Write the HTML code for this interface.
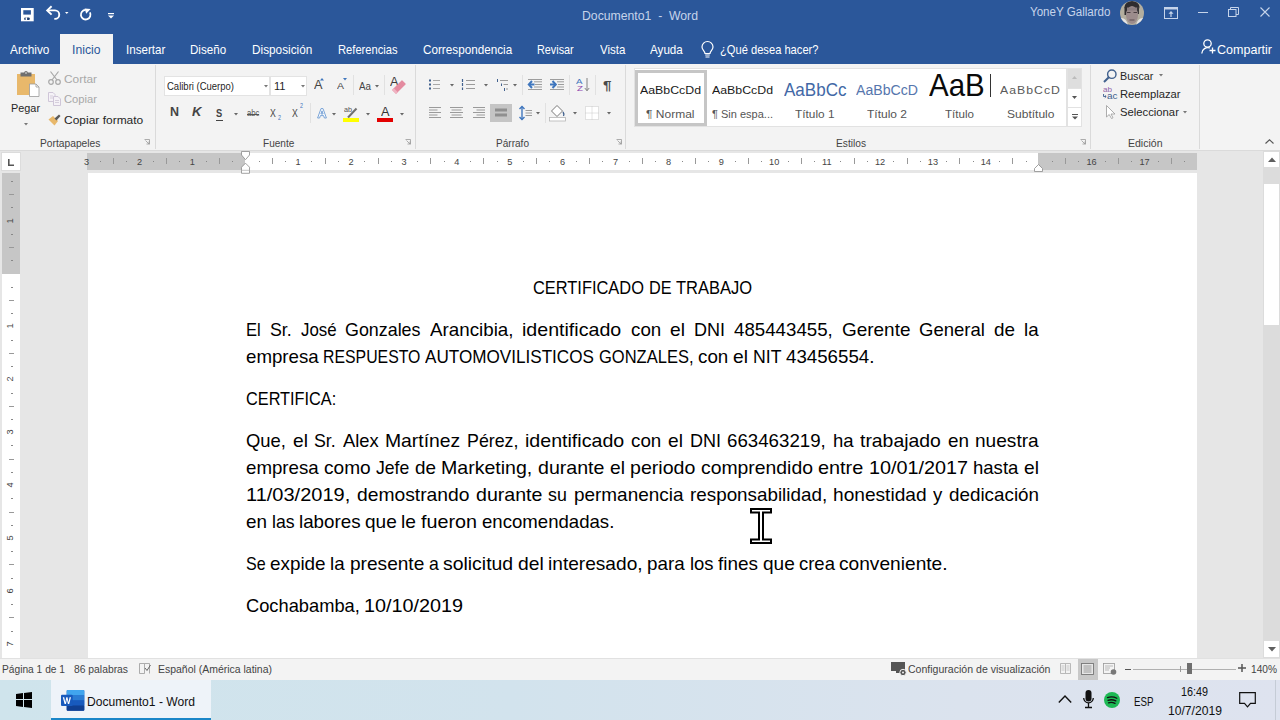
<!DOCTYPE html><html><head><meta charset="utf-8"><style>
html,body{margin:0;padding:0;width:1280px;height:720px;overflow:hidden;position:relative;font-family:"Liberation Sans", sans-serif;}
.tx{position:absolute;white-space:pre;line-height:1.117;transform-origin:0 0;}

.a{position:absolute;}
svg.a{overflow:visible;}
#title{left:0;top:0;width:1280px;height:64px;background:#2b579a;}
#ribbon{left:0;top:64px;width:1280px;height:87px;background:#f3f3f3;border-bottom:1px solid #dadada;box-sizing:border-box;}
#docbg{left:0;top:151px;width:1280px;height:507px;background:#e6e6e6;}
#page{left:88px;top:173px;width:1109px;height:485px;background:#fff;}
#status{left:0;top:658px;width:1280px;height:22px;background:#f3f3f3;border-top:1px solid #e1e1e1;box-sizing:border-box;}
#taskbar{left:0;top:680px;width:1280px;height:40px;background:linear-gradient(90deg,#cfe4ec 0,#d2e3ed 40%,#dbe3ee 75%,#dee3ef 100%);}
.vs{position:absolute;width:1px;background:#dadada;}

</style></head><body><div class="a" id="title"></div>
<div class="a" style="left:60px;top:34px;width:53px;height:30px;background:#f3f3f3;"></div>
<div class="a" id="ribbon"></div>
<div class="a" id="docbg"></div>
<div class="a" id="page"></div>
<div class="a" id="status"></div>
<div class="a" id="taskbar"></div>
<svg class="a" style="left:21px;top:8px" width="13" height="13.5" viewBox="0 0 13 13.5"><rect x="0" y="0" width="12.7" height="13.3" fill="#fff"/><rect x="2.3" y="2.2" width="7.6" height="4.4" fill="#2b579a"/><rect x="3.2" y="9.4" width="5.6" height="2.6" rx="1.1" fill="#1a3a6e"/><rect x="4.6" y="9.4" width="1.5" height="2.6" fill="#fff"/></svg>
<svg class="a" style="left:46px;top:5px" width="15" height="15" viewBox="0 0 15 15"><path d="M5.6 1.2L1.2 5.4L5.6 9.6" fill="none" stroke="#fff" stroke-width="1.9"/><path d="M1.8 5.4H9A4.25 4.25 0 0 1 9 13.9H8.3" fill="none" stroke="#fff" stroke-width="1.9"/></svg>
<svg class="a" style="left:65px;top:12px" width="3.5" height="2" viewBox="0 0 3.5 2"><path d="M0 0H3.5L1.75 2Z" fill="#fff"/></svg>
<svg class="a" style="left:79px;top:8px" width="13" height="13" viewBox="0 0 13 13"><path d="M10.9 4.4A4.8 4.8 0 1 1 6.5 1.9" fill="none" stroke="#fff" stroke-width="1.8"/><path d="M5.6 0.5L11.6 0.9L7.2 5.8Z" fill="#fff"/></svg>
<svg class="a" style="left:108px;top:13px" width="6" height="6" viewBox="0 0 6 6"><rect x="0" y="0" width="6" height="1.2" fill="#fff"/><path d="M0 2.5H6L3 5.5Z" fill="#fff"/></svg>
<span class="tx" style="left:582px;top:9.69px;font-size:12.5px;color:#c6d4ea;transform:scaleX(0.9783);">Documento1  -  Word</span>
<span class="tx" style="left:1030px;top:5.69px;font-size:12.5px;color:#c6d4ea;transform:scaleX(0.9265);">YoneY Gallardo</span>
<svg class="a" style="left:1120px;top:0.5px" width="24" height="24" viewBox="0 0 24 24"><defs><clipPath id="av"><circle cx="12" cy="12" r="12"/></clipPath></defs><g clip-path="url(#av)"><rect x="0" y="0" width="24" height="24" fill="#b3ae9f"/><path d="M0 17Q6 16 8 24H0ZM24 17Q18 16 16 24H24Z" fill="#e4e4e6"/><ellipse cx="12" cy="6" rx="7.5" ry="6" fill="#2f2d30"/><rect x="4.5" y="6" width="3" height="8" fill="#2f2d30"/><rect x="16.5" y="6" width="2.5" height="7" fill="#3a383a"/><ellipse cx="12" cy="14" rx="6" ry="9" fill="#9c8c8c"/><path d="M7 11.5H10.5M13.5 11.5H17" stroke="#4a3f42" stroke-width="1.2"/><path d="M9.5 19H14.5" stroke="#5e4f52" stroke-width="1"/><rect x="7" y="6.5" width="10" height="3" fill="#8c7f82"/></g></svg>
<svg class="a" style="left:1164px;top:6.5px" width="14" height="11" viewBox="0 0 14 11"><rect x="0.5" y="0.5" width="13" height="11" fill="none" stroke="#c6d4ea"/><rect x="0.5" y="0.5" width="13" height="2" fill="#c6d4ea"/><path d="M7 4L4.5 6.8H9.5Z" fill="#c6d4ea"/><rect x="6.4" y="6" width="1.2" height="4" fill="#c6d4ea"/></svg>
<div class="a" style="left:1197.5px;top:12px;width:10px;height:1px;background:#c6d4ea;"></div>
<svg class="a" style="left:1228px;top:7px" width="11" height="10" viewBox="0 0 11 10"><rect x="0.5" y="2.5" width="7.5" height="7" fill="none" stroke="#c6d4ea"/><path d="M2.5 2.5V0.5H10.5V7.5H8" fill="none" stroke="#c6d4ea"/></svg>
<svg class="a" style="left:1259.5px;top:7px" width="10" height="10" viewBox="0 0 10 10"><path d="M0.5 0.5L9.5 9.5M9.5 0.5L0.5 9.5" stroke="#c6d4ea" stroke-width="1.1"/></svg>
<span class="tx" style="left:10px;top:42.60px;font-size:12.6px;color:#ffffff;transform:scaleX(0.9381);">Archivo</span>
<span class="tx" style="left:71.5px;top:42.60px;font-size:12.6px;color:#2b579a;transform:scaleX(0.9692);">Inicio</span>
<span class="tx" style="left:125.7px;top:42.60px;font-size:12.6px;color:#ffffff;transform:scaleX(0.9203);">Insertar</span>
<span class="tx" style="left:190.3px;top:42.60px;font-size:12.6px;color:#ffffff;transform:scaleX(0.9208);">Diseño</span>
<span class="tx" style="left:252px;top:42.60px;font-size:12.6px;color:#ffffff;transform:scaleX(0.9362);">Disposición</span>
<span class="tx" style="left:338px;top:42.60px;font-size:12.6px;color:#ffffff;transform:scaleX(0.8869);">Referencias</span>
<span class="tx" style="left:422.5px;top:42.60px;font-size:12.6px;color:#ffffff;transform:scaleX(0.9299);">Correspondencia</span>
<span class="tx" style="left:537.3px;top:42.60px;font-size:12.6px;color:#ffffff;transform:scaleX(0.8594);">Revisar</span>
<span class="tx" style="left:599.6px;top:42.60px;font-size:12.6px;color:#ffffff;transform:scaleX(0.9143);">Vista</span>
<span class="tx" style="left:649.5px;top:42.60px;font-size:12.6px;color:#ffffff;transform:scaleX(0.9244);">Ayuda</span>
<span class="tx" style="left:720px;top:42.60px;font-size:12.6px;color:#ffffff;transform:scaleX(0.8848);">¿Qué desea hacer?</span>
<svg class="a" style="left:701px;top:41.5px" width="13" height="17" viewBox="0 0 13 17"><path d="M4 11.5C4 9 1 8 1 5A5.5 5.5 0 0 1 12 5C12 8 9 9 9 11.5Z" fill="none" stroke="#fff" stroke-width="1.2"/><path d="M4.2 13H8.8M4.5 15H8.5" stroke="#fff" stroke-width="1.2"/></svg>
<svg class="a" style="left:1201px;top:39px" width="15" height="15" viewBox="0 0 15 15"><circle cx="6.5" cy="4.5" r="3.7" fill="none" stroke="#fff" stroke-width="1.3"/><path d="M0.8 14.5A6 6 0 0 1 9 9" fill="none" stroke="#fff" stroke-width="1.3"/><path d="M8.5 11.5H14.5M11.5 8.5V14.5" stroke="#fff" stroke-width="1.3"/></svg>
<span class="tx" style="left:1217px;top:42.60px;font-size:12.6px;color:#ffffff;transform:scaleX(0.9946);">Compartir</span>
<div class="vs" style="left:155px;top:65px;height:84px"></div>
<div class="vs" style="left:415px;top:65px;height:84px"></div>
<div class="vs" style="left:625px;top:65px;height:84px"></div>
<div class="vs" style="left:1090px;top:65px;height:84px"></div>
<div class="vs" style="left:1199px;top:65px;height:84px"></div>
<svg class="a" style="left:16px;top:71px" width="24" height="27" viewBox="0 0 24 27"><rect x="1" y="3" width="18" height="21" fill="#e8b86b"/><path d="M4.5 1.5H15.5V5.5H4.5Z" fill="#6f6f6f"/><circle cx="10" cy="1.8" r="1.8" fill="#6f6f6f"/><circle cx="10" cy="2" r="0.8" fill="#f3f3f3"/><path d="M13.5 13H20L23 16V25.5H13.5Z" fill="#fff" stroke="#9a9a9a" stroke-width="0.8"/><path d="M20 13V16H23" fill="none" stroke="#9a9a9a" stroke-width="0.8"/></svg>
<span class="tx" style="left:11.3px;top:101.82px;font-size:11.8px;color:#262626;transform:scaleX(0.9211);">Pegar</span>
<svg class="a" style="left:23.5px;top:123px" width="4" height="2.5" viewBox="0 0 4 2.5"><path d="M0 0H4L2 2.5Z" fill="#777"/></svg>
<svg class="a" style="left:48px;top:71px" width="13" height="14" viewBox="0 0 13 14"><path d="M2.5 0.5L9 9M10.5 0.5L4 9" stroke="#a8a8a8" stroke-width="1.2"/><circle cx="3" cy="11" r="2.3" fill="none" stroke="#a8a8a8" stroke-width="1.2"/><circle cx="10" cy="11" r="2.3" fill="none" stroke="#a8a8a8" stroke-width="1.2"/></svg>
<span class="tx" style="left:63.7px;top:72.86px;font-size:11.2px;color:#a8a8a8;transform:scaleX(1.0613);">Cortar</span>
<svg class="a" style="left:48px;top:92px" width="13" height="14" viewBox="0 0 13 14"><path d="M0.5 0.5H5L7 2.5V9.5H0.5Z" fill="#f5f2f7" stroke="#cfc6d8"/><path d="M5.5 4.5H10L12.5 7V13.5H5.5Z" fill="#f5f2f7" stroke="#cfc6d8"/><path d="M2 4H5M2 6H5M7 8.5H11M7 10.5H11" stroke="#d6cfdc"/></svg>
<span class="tx" style="left:63.7px;top:93.36px;font-size:11.2px;color:#a8a8a8;transform:scaleX(1.0009);">Copiar</span>
<svg class="a" style="left:48px;top:114px" width="13" height="12" viewBox="0 0 13 12"><path d="M0.5 5.5L5 2L10 7L6.5 11.5Z" fill="#e8b86b"/><path d="M6.5 4.5L11 0.5L12.5 2L8.5 6.5Z" fill="#5a5a5a"/></svg>
<span class="tx" style="left:63.7px;top:114.46px;font-size:11.2px;color:#262626;transform:scaleX(1.0716);">Copiar formato</span>
<span class="tx" style="left:39.6px;top:137.97px;font-size:10.2px;color:#444;transform:scaleX(1.0059);">Portapapeles</span>
<svg class="a" style="left:144px;top:139px" width="6" height="6" viewBox="0 0 6 6"><path d="M0.5 0.5H5.5V5.5" fill="none" stroke="#999" stroke-width="0.8"/><path d="M1.5 1.5L5 5M5 2.5V5H2.5" fill="none" stroke="#999" stroke-width="0.8"/></svg>
<div class="a" style="left:164px;top:75.5px;width:106px;height:20px;background:#fff;border:1px solid #e3e3e3;box-sizing:border-box"></div>
<div class="a" style="left:270px;top:75.5px;width:36.5px;height:20px;background:#fff;border:1px solid #e3e3e3;box-sizing:border-box"></div>
<span class="tx" style="left:167px;top:79.68px;font-size:11.4px;color:#262626;transform:scaleX(0.8333);">Calibri (Cuerpo)</span>
<svg class="a" style="left:264px;top:84.5px" width="4" height="2.5" viewBox="0 0 4 2.5"><path d="M0 0H4L2 2.5Z" fill="#777"/></svg>
<span class="tx" style="left:274px;top:79.68px;font-size:11.4px;color:#262626;transform:scaleX(0.9723);">11</span>
<svg class="a" style="left:300.5px;top:84.5px" width="4" height="2.5" viewBox="0 0 4 2.5"><path d="M0 0H4L2 2.5Z" fill="#777"/></svg>
<span class="tx" style="left:313.5px;top:78.74px;font-size:12px;color:#444;transform:scaleX(1.0604);">A</span>
<svg class="a" style="left:319.5px;top:77.5px" width="4" height="2.5" viewBox="0 0 4 2.5"><path d="M0 2.5L2 0L4 2.5Z" fill="#3f76bd"/></svg>
<span class="tx" style="left:337px;top:80.73px;font-size:9.8px;color:#444;transform:scaleX(1.0692);">A</span>
<svg class="a" style="left:342.5px;top:77.5px" width="4" height="2.5" viewBox="0 0 4 2.5"><path d="M0 0H4L2 2.5Z" fill="#3f76bd"/></svg>
<div class="vs" style="left:352.5px;top:75px;height:20px;background:#e1e1e1"></div>
<span class="tx" style="left:359px;top:79.64px;font-size:11px;color:#444;transform:scaleX(0.8910);">Aa</span>
<svg class="a" style="left:374.8px;top:84.5px" width="4" height="2.5" viewBox="0 0 4 2.5"><path d="M0 0H4L2 2.5Z" fill="#666"/></svg>
<div class="vs" style="left:384px;top:75px;height:20px;background:#e1e1e1"></div>
<span class="tx" style="left:389.5px;top:76.19px;font-size:12.5px;color:#3a3a3a;transform:scaleX(1.0187);">A</span>
<svg class="a" style="left:393px;top:81px" width="12" height="12" viewBox="0 0 12 12"><g transform="rotate(-45 6 6)"><rect x="-1" y="3.2" width="14" height="5.6" rx="0.6" fill="#e48ba0"/><rect x="-1" y="3.2" width="2.5" height="5.6" fill="#f0b3c2"/></g></svg>
<span class="tx" style="left:170px;top:104.55px;font-size:13.2px;color:#444;transform:scaleX(0.9443);font-weight:bold">N</span>
<span class="tx" style="left:191.5px;top:104.55px;font-size:13.2px;color:#444;transform:scaleX(0.9967);font-weight:bold;font-style:italic">K</span>
<span class="tx" style="left:216px;top:108.00px;font-size:10.5px;color:#444;transform:scaleX(0.8837);font-weight:bold">S</span>
<div class="a" style="left:215.5px;top:119.5px;width:7px;height:1px;background:#444;"></div>
<svg class="a" style="left:234px;top:112.6px" width="4" height="2.5" viewBox="0 0 4 2.5"><path d="M0 0H4L2 2.5Z" fill="#666"/></svg>
<span class="tx" style="left:246.5px;top:108.40px;font-size:9.5px;color:#555;transform:scaleX(0.8155);">abc</span>
<div class="a" style="left:246.5px;top:113.5px;width:12.5px;height:0.8px;background:#555;"></div>
<span class="tx" style="left:270px;top:107.05px;font-size:11px;color:#444;transform:scaleX(0.7898);">X</span>
<span class="tx" style="left:277.5px;top:114.17px;font-size:7px;color:#3f76bd;transform:scaleX(0.7680);">2</span>
<span class="tx" style="left:292px;top:107.05px;font-size:11px;color:#444;transform:scaleX(0.7898);">X</span>
<span class="tx" style="left:300px;top:102.17px;font-size:7px;color:#3f76bd;transform:scaleX(0.7680);">2</span>
<div class="vs" style="left:309.5px;top:103px;height:20px;background:#e1e1e1"></div>
<svg class="a" style="left:317px;top:107.5px" width="10" height="10.5" viewBox="0 0 10 10.5"><path d="M0.6 10L4 0.6H6L9.4 10H7.4L6.6 7.6H3.4L2.6 10Z M3.9 6H6.1L5 2.8Z" fill="#fff" stroke="#6b9ad2" stroke-width="0.9" stroke-linejoin="round"/></svg>
<svg class="a" style="left:331.7px;top:112.6px" width="4" height="2.5" viewBox="0 0 4 2.5"><path d="M0 0H4L2 2.5Z" fill="#666"/></svg>
<span class="tx" style="left:343.5px;top:105.71px;font-size:7.5px;color:#555;transform:scaleX(0.9588);">ab</span>
<svg class="a" style="left:347px;top:107px" width="12" height="12" viewBox="0 0 12 12"><path d="M1 10.5L9.5 1.5" stroke="#707070" stroke-width="2"/></svg>
<div class="a" style="left:342.7px;top:118px;width:16.6px;height:4px;background:#ffff00;"></div>
<svg class="a" style="left:366px;top:112.6px" width="4" height="2.5" viewBox="0 0 4 2.5"><path d="M0 0H4L2 2.5Z" fill="#666"/></svg>
<span class="tx" style="left:380.5px;top:106.19px;font-size:12.5px;color:#333;transform:scaleX(1.0187);">A</span>
<div class="a" style="left:377px;top:118px;width:16px;height:3.7px;background:#e30000;"></div>
<svg class="a" style="left:400px;top:112.6px" width="4" height="2.5" viewBox="0 0 4 2.5"><path d="M0 0H4L2 2.5Z" fill="#666"/></svg>
<span class="tx" style="left:262.5px;top:137.97px;font-size:10.2px;color:#444;transform:scaleX(0.9868);">Fuente</span>
<svg class="a" style="left:405px;top:139px" width="6" height="6" viewBox="0 0 6 6"><path d="M0.5 0.5H5.5V5.5" fill="none" stroke="#999" stroke-width="0.8"/><path d="M1.5 1.5L5 5M5 2.5V5H2.5" fill="none" stroke="#999" stroke-width="0.8"/></svg>
<svg class="a" style="left:428px;top:79px" width="14" height="12" viewBox="0 0 14 12"><rect x="1" y="0.5" width="2" height="2" fill="#41618e"/><rect x="1" y="4.5" width="2" height="2" fill="#41618e"/><rect x="1" y="8.5" width="2" height="2" fill="#41618e"/><path d="M5 1.5H12M5 5.5H12M5 9.5H12" stroke="#a8a8a8"/></svg>
<svg class="a" style="left:450px;top:84px" width="4" height="2.5" viewBox="0 0 4 2.5"><path d="M0 0H4L2 2.5Z" fill="#666"/></svg>
<svg class="a" style="left:461px;top:79px" width="15" height="12" viewBox="0 0 15 12"><path d="M1.5 0V3M1.5 4V7M1.5 8.5V11" stroke="#41618e" stroke-width="1.2"/><path d="M5 1.5H14M5 5.5H14M5 9.5H14" stroke="#9a9a9a"/></svg>
<svg class="a" style="left:484px;top:84px" width="4" height="2.5" viewBox="0 0 4 2.5"><path d="M0 0H4L2 2.5Z" fill="#666"/></svg>
<svg class="a" style="left:496px;top:79px" width="15" height="13" viewBox="0 0 15 13"><path d="M1.5 0V3M5.5 4.5V7M8.5 9V12" stroke="#41618e" stroke-width="1"/><path d="M4 1.5H12M7.5 5.5H12M10 10H12" stroke="#9a9a9a"/></svg>
<svg class="a" style="left:512.5px;top:84px" width="4" height="2.5" viewBox="0 0 4 2.5"><path d="M0 0H4L2 2.5Z" fill="#666"/></svg>
<div class="vs" style="left:522px;top:75px;height:20px;background:#e1e1e1"></div>
<svg class="a" style="left:527.5px;top:79px" width="15" height="11" viewBox="0 0 15 11"><path d="M1 5.5H6.5" stroke="#3f76bd" stroke-width="2"/><path d="M4 2L0.8 5.5L4 9" fill="none" stroke="#3f76bd" stroke-width="2"/><path d="M0 0.5H14M6 2.8H14M7 5.5H14M6 8H14M0 10.5H14" stroke="#9d9d9d"/></svg>
<svg class="a" style="left:550px;top:79px" width="15" height="11" viewBox="0 0 15 11"><path d="M0 5.5H5.5" stroke="#3f76bd" stroke-width="2"/><path d="M2.5 2L5.8 5.5L2.5 9" fill="none" stroke="#3f76bd" stroke-width="2"/><path d="M0 0.5H14M7 2.8H14M8 5.5H14M7 8H14M0 10.5H14" stroke="#9d9d9d"/></svg>
<div class="vs" style="left:569px;top:75px;height:20px;background:#e1e1e1"></div>
<span class="tx" style="left:576px;top:77.71px;font-size:7.5px;color:#3f76bd;transform:scaleX(1.2960);">A</span>
<span class="tx" style="left:576.5px;top:85.21px;font-size:7.5px;color:#8e44ad;transform:scaleX(1.3061);">Z</span>
<svg class="a" style="left:584px;top:78px" width="6" height="14" viewBox="0 0 6 14"><path d="M3 0V12.5M0.8 10L3 12.8L5.2 10" fill="none" stroke="#777" stroke-width="0.9"/></svg>
<div class="vs" style="left:594.5px;top:75px;height:20px;background:#e1e1e1"></div>
<span class="tx" style="left:602.5px;top:79.69px;font-size:12.5px;color:#4a4a4a;transform:scaleX(1.2225);font-weight:bold">¶</span>
<svg class="a" style="left:429px;top:107px" width="13" height="11" viewBox="0 0 13 11"><path d="M0 0.5H12M0 3H8.5M0 5.5H12M0 8H8.5M0 10.5H12" stroke="#9a9a9a"/></svg>
<svg class="a" style="left:450px;top:107px" width="14" height="11" viewBox="0 0 14 11"><path d="M0 0.5H13M1.5 3H11.5M0 5.5H13M1.5 8H11.5M0 10.5H13" stroke="#9a9a9a"/></svg>
<svg class="a" style="left:473px;top:107px" width="13" height="11" viewBox="0 0 13 11"><path d="M0 0.5H12M3.5 3H12M0 5.5H12M3.5 8H12M0 10.5H12" stroke="#9a9a9a"/></svg>
<div class="a" style="left:490px;top:104px;width:22px;height:18px;background:#c5c5c5;"></div>
<svg class="a" style="left:495px;top:108px" width="12" height="10" viewBox="0 0 12 10"><path d="M0 2H12M0 7H12" stroke="#8f8f8f" stroke-width="3"/></svg>
<svg class="a" style="left:519px;top:106px" width="14" height="14" viewBox="0 0 14 14"><path d="M3 0.5V13.5" stroke="#3f76bd" stroke-width="1.4"/><path d="M0.5 3L3 0.5L5.5 3M0.5 11L3 13.5L5.5 11" fill="none" stroke="#3f76bd" stroke-width="1.4"/><path d="M6.5 4.5H13M6.5 7H13M6.5 9.5H13" stroke="#9a9a9a"/></svg>
<svg class="a" style="left:536px;top:112px" width="4" height="2.5" viewBox="0 0 4 2.5"><path d="M0 0H4L2 2.5Z" fill="#666"/></svg>
<div class="vs" style="left:545px;top:103px;height:20px;background:#e1e1e1"></div>
<svg class="a" style="left:549px;top:104px" width="18" height="18" viewBox="0 0 18 18"><path d="M8 1.5L13.5 7L8 12.5L2.5 7Z" fill="#fff" stroke="#6a6a6a" stroke-width="0.9"/><path d="M14 8Q15.5 10 14.5 12" stroke="#41618e" stroke-width="1.3" fill="none"/><rect x="0.5" y="13.5" width="16" height="3.5" fill="#fff" stroke="#b5b5b5" stroke-width="0.8"/></svg>
<svg class="a" style="left:573px;top:112px" width="4" height="2.5" viewBox="0 0 4 2.5"><path d="M0 0H4L2 2.5Z" fill="#666"/></svg>
<svg class="a" style="left:585px;top:106px" width="14" height="14" viewBox="0 0 14 14"><rect x="0.5" y="0.5" width="13" height="13" fill="#fff" stroke="#c8c8c8" stroke-dasharray="1 1"/><path d="M7 0.5V13.5M0.5 7H13.5" stroke="#c8c8c8" stroke-dasharray="1 1"/></svg>
<svg class="a" style="left:607px;top:112px" width="4" height="2.5" viewBox="0 0 4 2.5"><path d="M0 0H4L2 2.5Z" fill="#666"/></svg>
<span class="tx" style="left:496px;top:137.97px;font-size:10.2px;color:#444;transform:scaleX(0.9874);">Párrafo</span>
<svg class="a" style="left:616px;top:139px" width="6" height="6" viewBox="0 0 6 6"><path d="M0.5 0.5H5.5V5.5" fill="none" stroke="#999" stroke-width="0.8"/><path d="M1.5 1.5L5 5M5 2.5V5H2.5" fill="none" stroke="#999" stroke-width="0.8"/></svg>
<div class="a" style="left:634px;top:68px;width:433px;height:59px;background:#fff;border:1px solid #e2e2e2;box-sizing:border-box"></div>
<div class="a" style="left:635px;top:69.5px;width:71.5px;height:56px;background:transparent;border:3px solid #c6c6c6;box-sizing:border-box"></div>
<span class="tx" style="left:639.5px;top:84.32px;font-size:11.8px;color:#1a1a1a;transform:scaleX(1.0452);">AaBbCcDd</span>
<span class="tx" style="left:646px;top:108.36px;font-size:11.2px;color:#555;transform:scaleX(1.0737);">¶ Normal</span>
<span class="tx" style="left:711.5px;top:84.32px;font-size:11.8px;color:#1a1a1a;transform:scaleX(1.0452);">AaBbCcDd</span>
<span class="tx" style="left:712px;top:108.36px;font-size:11.2px;color:#555;transform:scaleX(0.9841);">¶ Sin espa...</span>
<span class="tx" style="left:784px;top:79.67px;font-size:18.6px;color:#4268a6;transform:scaleX(0.9162);">AaBbCc</span>
<span class="tx" style="left:794.5px;top:108.36px;font-size:11.2px;color:#555;transform:scaleX(1.0586);">Título 1</span>
<span class="tx" style="left:856px;top:81.70px;font-size:14.7px;color:#5676ad;transform:scaleX(0.9612);">AaBbCcD</span>
<span class="tx" style="left:866.5px;top:108.36px;font-size:11.2px;color:#555;transform:scaleX(1.0720);">Título 2</span>
<span class="tx" style="left:928.5px;top:68.38px;font-size:31.4px;color:#0a0a0a;transform:scaleX(0.9386);">AaB</span>
<div class="a" style="left:989.5px;top:74px;width:1px;height:23px;background:#333;"></div>
<span class="tx" style="left:944.5px;top:108.36px;font-size:11.2px;color:#555;transform:scaleX(1.0363);">Título</span>
<span class="tx" style="left:999.5px;top:84.32px;font-size:11.8px;color:#5a5a5a;transform:scaleX(1.0375);letter-spacing:1px">AaBbCcD</span>
<span class="tx" style="left:1006.5px;top:108.36px;font-size:11.2px;color:#555;transform:scaleX(1.0753);">Subtítulo</span>
<div class="a" style="left:1067px;top:68px;width:15px;height:59px;background:#fff;border:1px solid #e2e2e2;box-sizing:border-box"></div>
<div class="a" style="left:1068px;top:69px;width:13px;height:19px;background:#dedede;"></div>
<svg class="a" style="left:1072px;top:76px" width="5" height="3" viewBox="0 0 5 3"><path d="M0 3L2.5 0L5 3Z" fill="#bbb"/></svg>
<div class="a" style="left:1067px;top:88px;width:15px;height:1px;background:#e2e2e2"></div>
<div class="a" style="left:1067px;top:107px;width:15px;height:1px;background:#e2e2e2"></div>
<svg class="a" style="left:1072px;top:96px" width="5" height="3" viewBox="0 0 5 3"><path d="M0 0H5L2.5 3Z" fill="#555"/></svg>
<svg class="a" style="left:1071.5px;top:114px" width="6" height="6" viewBox="0 0 6 6"><rect x="0" y="0" width="6" height="1" fill="#555"/><path d="M0 2.5H6L3 5.5Z" fill="#555"/></svg>
<span class="tx" style="left:836px;top:137.97px;font-size:10.2px;color:#444;transform:scaleX(0.9995);">Estilos</span>
<svg class="a" style="left:1080px;top:139px" width="6" height="6" viewBox="0 0 6 6"><path d="M0.5 0.5H5.5V5.5" fill="none" stroke="#999" stroke-width="0.8"/><path d="M1.5 1.5L5 5M5 2.5V5H2.5" fill="none" stroke="#999" stroke-width="0.8"/></svg>
<svg class="a" style="left:1103px;top:68.5px" width="14" height="14" viewBox="0 0 14 14"><circle cx="8.8" cy="5.2" r="4.2" fill="none" stroke="#41618e" stroke-width="1.4"/><path d="M5.8 8.2L1 13" stroke="#41618e" stroke-width="2"/></svg>
<span class="tx" style="left:1119.6px;top:69.76px;font-size:11.2px;color:#262626;transform:scaleX(0.9590);">Buscar</span>
<svg class="a" style="left:1159px;top:74px" width="4" height="2.5" viewBox="0 0 4 2.5"><path d="M0 0H4L2 2.5Z" fill="#777"/></svg>
<span class="tx" style="left:1103px;top:86.44px;font-size:7.8px;color:#8e62a8;transform:scaleX(1.0360);">ab</span>
<span class="tx" style="left:1106.5px;top:92.22px;font-size:8.6px;color:#41618e;transform:scaleX(1.1566);">ac</span>
<svg class="a" style="left:1102.5px;top:94px" width="4" height="5" viewBox="0 0 4 5"><path d="M0.5 0V2.5H3M1.8 1.2L3.2 2.5L1.8 3.8" fill="none" stroke="#41618e" stroke-width="0.9"/></svg>
<span class="tx" style="left:1119.6px;top:88.26px;font-size:11.2px;color:#262626;transform:scaleX(1.0045);">Reemplazar</span>
<svg class="a" style="left:1106px;top:105px" width="10" height="14" viewBox="0 0 10 14"><path d="M0.5 0.5V12L3.2 9.5L5.5 13.5L7 12.8L5 9H9Z" fill="#fff" stroke="#999" stroke-width="0.8"/></svg>
<span class="tx" style="left:1119.6px;top:106.26px;font-size:11.2px;color:#262626;transform:scaleX(1.0074);">Seleccionar</span>
<svg class="a" style="left:1183px;top:111px" width="4" height="2.5" viewBox="0 0 4 2.5"><path d="M0 0H4L2 2.5Z" fill="#777"/></svg>
<span class="tx" style="left:1128px;top:137.97px;font-size:10.2px;color:#444;transform:scaleX(1.0323);">Edición</span>
<svg class="a" style="left:1265px;top:139px" width="9" height="5" viewBox="0 0 9 5"><path d="M0.5 4.5L4.5 0.8L8.5 4.5" fill="none" stroke="#555" stroke-width="1.1"/></svg>
<div class="a" style="left:1px;top:152px;width:20px;height:19px;background:#fff;border:1px solid #dcdcdc;box-sizing:border-box"></div>
<svg class="a" style="left:8px;top:159px" width="6" height="7" viewBox="0 0 6 7"><path d="M0.8 0V6.2H6" fill="none" stroke="#555" stroke-width="1.6"/></svg>
<div class="a" style="left:87px;top:153px;width:1110px;height:17px;background:#c6c6c6;"></div>
<div class="a" style="left:245px;top:153px;width:793px;height:17px;background:#fff;"></div>
<span class="tx" style="left:84.0px;top:157.07px;font-size:9.2px;color:#444;">3</span>
<div class="a" style="left:100px;top:160.5px;width:1px;height:1.5px;background:#888;"></div>
<div class="a" style="left:113px;top:158px;width:1px;height:6px;background:#999;"></div>
<div class="a" style="left:126px;top:160.5px;width:1px;height:1.5px;background:#888;"></div>
<span class="tx" style="left:136.9px;top:157.07px;font-size:9.2px;color:#444;">2</span>
<div class="a" style="left:153px;top:160.5px;width:1px;height:1.5px;background:#888;"></div>
<div class="a" style="left:166px;top:158px;width:1px;height:6px;background:#999;"></div>
<div class="a" style="left:179px;top:160.5px;width:1px;height:1.5px;background:#888;"></div>
<span class="tx" style="left:189.8px;top:157.07px;font-size:9.2px;color:#444;">1</span>
<div class="a" style="left:206px;top:160.5px;width:1px;height:1.5px;background:#888;"></div>
<div class="a" style="left:219px;top:158px;width:1px;height:6px;background:#999;"></div>
<div class="a" style="left:232px;top:160.5px;width:1px;height:1.5px;background:#888;"></div>
<div class="a" style="left:259px;top:160.5px;width:1px;height:1.5px;background:#888;"></div>
<div class="a" style="left:272px;top:158px;width:1px;height:6px;background:#999;"></div>
<div class="a" style="left:285px;top:160.5px;width:1px;height:1.5px;background:#888;"></div>
<span class="tx" style="left:295.6px;top:157.07px;font-size:9.2px;color:#444;">1</span>
<div class="a" style="left:311px;top:160.5px;width:1px;height:1.5px;background:#888;"></div>
<div class="a" style="left:325px;top:158px;width:1px;height:6px;background:#999;"></div>
<div class="a" style="left:338px;top:160.5px;width:1px;height:1.5px;background:#888;"></div>
<span class="tx" style="left:348.5px;top:157.07px;font-size:9.2px;color:#444;">2</span>
<div class="a" style="left:364px;top:160.5px;width:1px;height:1.5px;background:#888;"></div>
<div class="a" style="left:378px;top:158px;width:1px;height:6px;background:#999;"></div>
<div class="a" style="left:391px;top:160.5px;width:1px;height:1.5px;background:#888;"></div>
<span class="tx" style="left:401.4px;top:157.07px;font-size:9.2px;color:#444;">3</span>
<div class="a" style="left:417px;top:160.5px;width:1px;height:1.5px;background:#888;"></div>
<div class="a" style="left:430px;top:158px;width:1px;height:6px;background:#999;"></div>
<div class="a" style="left:444px;top:160.5px;width:1px;height:1.5px;background:#888;"></div>
<span class="tx" style="left:454.3px;top:157.07px;font-size:9.2px;color:#444;">4</span>
<div class="a" style="left:470px;top:160.5px;width:1px;height:1.5px;background:#888;"></div>
<div class="a" style="left:483px;top:158px;width:1px;height:6px;background:#999;"></div>
<div class="a" style="left:497px;top:160.5px;width:1px;height:1.5px;background:#888;"></div>
<span class="tx" style="left:507.2px;top:157.07px;font-size:9.2px;color:#444;">5</span>
<div class="a" style="left:523px;top:160.5px;width:1px;height:1.5px;background:#888;"></div>
<div class="a" style="left:536px;top:158px;width:1px;height:6px;background:#999;"></div>
<div class="a" style="left:549px;top:160.5px;width:1px;height:1.5px;background:#888;"></div>
<span class="tx" style="left:560.1px;top:157.07px;font-size:9.2px;color:#444;">6</span>
<div class="a" style="left:576px;top:160.5px;width:1px;height:1.5px;background:#888;"></div>
<div class="a" style="left:589px;top:158px;width:1px;height:6px;background:#999;"></div>
<div class="a" style="left:602px;top:160.5px;width:1px;height:1.5px;background:#888;"></div>
<span class="tx" style="left:613.0px;top:157.07px;font-size:9.2px;color:#444;">7</span>
<div class="a" style="left:629px;top:160.5px;width:1px;height:1.5px;background:#888;"></div>
<div class="a" style="left:642px;top:158px;width:1px;height:6px;background:#999;"></div>
<div class="a" style="left:655px;top:160.5px;width:1px;height:1.5px;background:#888;"></div>
<span class="tx" style="left:665.9px;top:157.07px;font-size:9.2px;color:#444;">8</span>
<div class="a" style="left:682px;top:160.5px;width:1px;height:1.5px;background:#888;"></div>
<div class="a" style="left:695px;top:158px;width:1px;height:6px;background:#999;"></div>
<div class="a" style="left:708px;top:160.5px;width:1px;height:1.5px;background:#888;"></div>
<span class="tx" style="left:718.8px;top:157.07px;font-size:9.2px;color:#444;">9</span>
<div class="a" style="left:735px;top:160.5px;width:1px;height:1.5px;background:#888;"></div>
<div class="a" style="left:748px;top:158px;width:1px;height:6px;background:#999;"></div>
<div class="a" style="left:761px;top:160.5px;width:1px;height:1.5px;background:#888;"></div>
<span class="tx" style="left:769.1px;top:157.07px;font-size:9.2px;color:#444;">10</span>
<div class="a" style="left:788px;top:160.5px;width:1px;height:1.5px;background:#888;"></div>
<div class="a" style="left:801px;top:158px;width:1px;height:6px;background:#999;"></div>
<div class="a" style="left:814px;top:160.5px;width:1px;height:1.5px;background:#888;"></div>
<span class="tx" style="left:822.0px;top:157.07px;font-size:9.2px;color:#444;">11</span>
<div class="a" style="left:840px;top:160.5px;width:1px;height:1.5px;background:#888;"></div>
<div class="a" style="left:854px;top:158px;width:1px;height:6px;background:#999;"></div>
<div class="a" style="left:867px;top:160.5px;width:1px;height:1.5px;background:#888;"></div>
<span class="tx" style="left:874.9px;top:157.07px;font-size:9.2px;color:#444;">12</span>
<div class="a" style="left:893px;top:160.5px;width:1px;height:1.5px;background:#888;"></div>
<div class="a" style="left:907px;top:158px;width:1px;height:6px;background:#999;"></div>
<div class="a" style="left:920px;top:160.5px;width:1px;height:1.5px;background:#888;"></div>
<span class="tx" style="left:927.8px;top:157.07px;font-size:9.2px;color:#444;">13</span>
<div class="a" style="left:946px;top:160.5px;width:1px;height:1.5px;background:#888;"></div>
<div class="a" style="left:959px;top:158px;width:1px;height:6px;background:#999;"></div>
<div class="a" style="left:973px;top:160.5px;width:1px;height:1.5px;background:#888;"></div>
<span class="tx" style="left:980.7px;top:157.07px;font-size:9.2px;color:#444;">14</span>
<div class="a" style="left:999px;top:160.5px;width:1px;height:1.5px;background:#888;"></div>
<div class="a" style="left:1012px;top:158px;width:1px;height:6px;background:#999;"></div>
<div class="a" style="left:1026px;top:160.5px;width:1px;height:1.5px;background:#888;"></div>
<div class="a" style="left:1052px;top:160.5px;width:1px;height:1.5px;background:#888;"></div>
<div class="a" style="left:1065px;top:158px;width:1px;height:6px;background:#999;"></div>
<div class="a" style="left:1078px;top:160.5px;width:1px;height:1.5px;background:#888;"></div>
<span class="tx" style="left:1086.5px;top:157.07px;font-size:9.2px;color:#444;">16</span>
<div class="a" style="left:1105px;top:160.5px;width:1px;height:1.5px;background:#888;"></div>
<div class="a" style="left:1118px;top:158px;width:1px;height:6px;background:#999;"></div>
<div class="a" style="left:1131px;top:160.5px;width:1px;height:1.5px;background:#888;"></div>
<span class="tx" style="left:1139.4px;top:157.07px;font-size:9.2px;color:#444;">17</span>
<div class="a" style="left:1158px;top:160.5px;width:1px;height:1.5px;background:#888;"></div>
<div class="a" style="left:1171px;top:158px;width:1px;height:6px;background:#999;"></div>
<div class="a" style="left:1184px;top:160.5px;width:1px;height:1.5px;background:#888;"></div>
<svg class="a" style="left:241px;top:151px" width="9" height="23" viewBox="0 0 9 23"><path d="M0.5 0.5H8.5V4L4.5 8.7L0.5 4Z" fill="#fff" stroke="#8a8a8a" stroke-width="0.8"/><path d="M4.5 12.2L8.5 16.2V22.3H0.5V16.2Z" fill="#fff" stroke="#8a8a8a" stroke-width="0.8"/><path d="M0.5 19.3H8.5" stroke="#b5b5b5" stroke-width="0.8"/></svg>
<svg class="a" style="left:1034px;top:163.5px" width="9" height="8" viewBox="0 0 9 8"><path d="M4.5 0.5L8.5 4.5V7.5H0.5V4.5Z" fill="#fff" stroke="#8a8a8a" stroke-width="0.8"/></svg>
<div class="a" style="left:2px;top:173px;width:18px;height:485px;background:#fff;"></div>
<div class="a" style="left:2px;top:173px;width:18px;height:101px;background:#c6c6c6;"></div>
<div class="a" style="left:11px;top:181px;width:1.5px;height:1px;background:#888;"></div>
<div class="a" style="left:9px;top:194px;width:5px;height:1px;background:#999;"></div>
<div class="a" style="left:11px;top:207px;width:1.5px;height:1px;background:#888;"></div>
<div class="a" style="left:11px;top:234px;width:1.5px;height:1px;background:#888;"></div>
<div class="a" style="left:9px;top:247px;width:5px;height:1px;background:#999;"></div>
<div class="a" style="left:11px;top:260px;width:1.5px;height:1px;background:#888;"></div>
<div class="a" style="white-space:pre;left:5px;top:215.6px;font-size:9.2px;color:#444;transform:rotate(-90deg);transform-origin:50% 50%;width:10px;text-align:center;line-height:10px">1</div>
<div class="a" style="left:11px;top:287px;width:1.5px;height:1px;background:#888;"></div>
<div class="a" style="left:9px;top:300px;width:5px;height:1px;background:#999;"></div>
<div class="a" style="left:11px;top:313px;width:1.5px;height:1px;background:#888;"></div>
<div class="a" style="left:11px;top:340px;width:1.5px;height:1px;background:#888;"></div>
<div class="a" style="left:9px;top:353px;width:5px;height:1px;background:#999;"></div>
<div class="a" style="left:11px;top:366px;width:1.5px;height:1px;background:#888;"></div>
<div class="a" style="white-space:pre;left:5px;top:321.4px;font-size:9.2px;color:#444;transform:rotate(-90deg);transform-origin:50% 50%;width:10px;text-align:center;line-height:10px">1</div>
<div class="a" style="left:11px;top:393px;width:1.5px;height:1px;background:#888;"></div>
<div class="a" style="left:9px;top:406px;width:5px;height:1px;background:#999;"></div>
<div class="a" style="left:11px;top:419px;width:1.5px;height:1px;background:#888;"></div>
<div class="a" style="white-space:pre;left:5px;top:374.3px;font-size:9.2px;color:#444;transform:rotate(-90deg);transform-origin:50% 50%;width:10px;text-align:center;line-height:10px">2</div>
<div class="a" style="left:11px;top:445px;width:1.5px;height:1px;background:#888;"></div>
<div class="a" style="left:9px;top:459px;width:5px;height:1px;background:#999;"></div>
<div class="a" style="left:11px;top:472px;width:1.5px;height:1px;background:#888;"></div>
<div class="a" style="white-space:pre;left:5px;top:427.2px;font-size:9.2px;color:#444;transform:rotate(-90deg);transform-origin:50% 50%;width:10px;text-align:center;line-height:10px">3</div>
<div class="a" style="left:11px;top:498px;width:1.5px;height:1px;background:#888;"></div>
<div class="a" style="left:9px;top:512px;width:5px;height:1px;background:#999;"></div>
<div class="a" style="left:11px;top:525px;width:1.5px;height:1px;background:#888;"></div>
<div class="a" style="white-space:pre;left:5px;top:480.1px;font-size:9.2px;color:#444;transform:rotate(-90deg);transform-origin:50% 50%;width:10px;text-align:center;line-height:10px">4</div>
<div class="a" style="left:11px;top:551px;width:1.5px;height:1px;background:#888;"></div>
<div class="a" style="left:9px;top:564px;width:5px;height:1px;background:#999;"></div>
<div class="a" style="left:11px;top:578px;width:1.5px;height:1px;background:#888;"></div>
<div class="a" style="white-space:pre;left:5px;top:533.0px;font-size:9.2px;color:#444;transform:rotate(-90deg);transform-origin:50% 50%;width:10px;text-align:center;line-height:10px">5</div>
<div class="a" style="left:11px;top:604px;width:1.5px;height:1px;background:#888;"></div>
<div class="a" style="left:9px;top:617px;width:5px;height:1px;background:#999;"></div>
<div class="a" style="left:11px;top:631px;width:1.5px;height:1px;background:#888;"></div>
<div class="a" style="white-space:pre;left:5px;top:585.9px;font-size:9.2px;color:#444;transform:rotate(-90deg);transform-origin:50% 50%;width:10px;text-align:center;line-height:10px">6</div>
<div class="a" style="white-space:pre;left:5px;top:638.8px;font-size:9.2px;color:#444;transform:rotate(-90deg);transform-origin:50% 50%;width:10px;text-align:center;line-height:10px">7</div>
<div class="a" style="left:1263px;top:151px;width:17px;height:507px;background:#dcdcdc;"></div>
<div class="a" style="left:1264px;top:152px;width:15px;height:15px;background:#fff;"></div>
<svg class="a" style="left:1268px;top:157px" width="8" height="5" viewBox="0 0 8 5"><path d="M0 5L4 0.5L8 5Z" fill="#5f5f5f"/></svg>
<div class="a" style="left:1264px;top:184px;width:15px;height:141px;background:#fff;"></div>
<div class="a" style="left:1264px;top:641px;width:15px;height:16px;background:#fff;"></div>
<svg class="a" style="left:1268px;top:647px" width="8" height="5" viewBox="0 0 8 5"><path d="M0 0H8L4 4.5Z" fill="#5f5f5f"/></svg>
<span class="tx" style="left:532.96px;top:278.35px;font-size:18.4px;color:#000;transform:scaleX(0.8922);">CERTIFICADO</span>
<span class="tx" style="left:648.53px;top:278.35px;font-size:18.4px;color:#000;transform:scaleX(0.8857);">DE</span>
<span class="tx" style="left:675.81px;top:278.35px;font-size:18.4px;color:#000;transform:scaleX(0.8986);">TRABAJO</span>
<span class="tx" style="left:245.90px;top:320.35px;font-size:18.4px;color:#000;transform:scaleX(0.9010);">El</span>
<span class="tx" style="left:269.69px;top:320.35px;font-size:18.4px;color:#000;transform:scaleX(0.9671);">Sr.</span>
<span class="tx" style="left:300.50px;top:320.35px;font-size:18.4px;color:#000;transform:scaleX(0.9166);">José</span>
<span class="tx" style="left:345.18px;top:320.35px;font-size:18.4px;color:#000;transform:scaleX(0.9713);">Gonzales</span>
<span class="tx" style="left:429.69px;top:320.35px;font-size:18.4px;color:#000;transform:scaleX(1.0215);">Arancibia,</span>
<span class="tx" style="left:522.28px;top:320.35px;font-size:18.4px;color:#000;transform:scaleX(1.0661);">identificado</span>
<span class="tx" style="left:630.53px;top:320.35px;font-size:18.4px;color:#000;transform:scaleX(1.0210);">con</span>
<span class="tx" style="left:669.87px;top:320.35px;font-size:18.4px;color:#000;transform:scaleX(1.0434);">el</span>
<span class="tx" style="left:693.86px;top:320.35px;font-size:18.4px;color:#000;transform:scaleX(0.9807);">DNI</span>
<span class="tx" style="left:733.98px;top:320.35px;font-size:18.4px;color:#000;transform:scaleX(1.0169);">485443455,</span>
<span class="tx" style="left:841.84px;top:320.35px;font-size:18.4px;color:#000;transform:scaleX(1.0300);">Gerente</span>
<span class="tx" style="left:919.34px;top:320.35px;font-size:18.4px;color:#000;transform:scaleX(1.0071);">General</span>
<span class="tx" style="left:994.29px;top:320.35px;font-size:18.4px;color:#000;transform:scaleX(1.0260);">de</span>
<span class="tx" style="left:1024.34px;top:320.35px;font-size:18.4px;color:#000;transform:scaleX(1.0162);">la</span>
<span class="tx" style="left:245.90px;top:347.35px;font-size:18.4px;color:#000;transform:scaleX(1.0153);">empresa</span>
<span class="tx" style="left:323.20px;top:347.35px;font-size:18.4px;color:#000;transform:scaleX(0.8612);">RESPUESTO</span>
<span class="tx" style="left:425.25px;top:347.35px;font-size:18.4px;color:#000;transform:scaleX(0.9306);">AUTOMOVILISTICOS</span>
<span class="tx" style="left:598.85px;top:347.35px;font-size:18.4px;color:#000;transform:scaleX(0.8977);">GONZALES,</span>
<span class="tx" style="left:697.99px;top:347.35px;font-size:18.4px;color:#000;transform:scaleX(1.0210);">con</span>
<span class="tx" style="left:732.91px;top:347.35px;font-size:18.4px;color:#000;transform:scaleX(1.0434);">el</span>
<span class="tx" style="left:752.50px;top:347.35px;font-size:18.4px;color:#000;transform:scaleX(0.9597);">NIT</span>
<span class="tx" style="left:785.57px;top:347.35px;font-size:18.4px;color:#000;transform:scaleX(1.0173);">43456554.</span>
<span class="tx" style="left:245.90px;top:389.35px;font-size:18.4px;color:#000;transform:scaleX(0.8858);">CERTIFICA:</span>
<span class="tx" style="left:245.90px;top:431.35px;font-size:18.4px;color:#000;transform:scaleX(1.0019);">Que,</span>
<span class="tx" style="left:292.53px;top:431.35px;font-size:18.4px;color:#000;transform:scaleX(1.0434);">el</span>
<span class="tx" style="left:314.15px;top:431.35px;font-size:18.4px;color:#000;transform:scaleX(0.9671);">Sr.</span>
<span class="tx" style="left:342.59px;top:431.35px;font-size:18.4px;color:#000;transform:scaleX(0.9983);">Alex</span>
<span class="tx" style="left:384.98px;top:431.35px;font-size:18.4px;color:#000;transform:scaleX(1.0519);">Martínez</span>
<span class="tx" style="left:466.92px;top:431.35px;font-size:18.4px;color:#000;transform:scaleX(0.9683);">Pérez,</span>
<span class="tx" style="left:525.07px;top:431.35px;font-size:18.4px;color:#000;transform:scaleX(1.0661);">identificado</span>
<span class="tx" style="left:630.94px;top:431.35px;font-size:18.4px;color:#000;transform:scaleX(1.0210);">con</span>
<span class="tx" style="left:667.90px;top:431.35px;font-size:18.4px;color:#000;transform:scaleX(1.0434);">el</span>
<span class="tx" style="left:689.52px;top:431.35px;font-size:18.4px;color:#000;transform:scaleX(0.9807);">DNI</span>
<span class="tx" style="left:727.26px;top:431.35px;font-size:18.4px;color:#000;transform:scaleX(1.0169);">663463219,</span>
<span class="tx" style="left:832.75px;top:431.35px;font-size:18.4px;color:#000;transform:scaleX(1.0069);">ha</span>
<span class="tx" style="left:860.04px;top:431.35px;font-size:18.4px;color:#000;transform:scaleX(1.0538);">trabajado</span>
<span class="tx" style="left:947.54px;top:431.35px;font-size:18.4px;color:#000;transform:scaleX(1.0260);">en</span>
<span class="tx" style="left:975.22px;top:431.35px;font-size:18.4px;color:#000;transform:scaleX(1.0381);">nuestra</span>
<span class="tx" style="left:245.90px;top:458.35px;font-size:18.4px;color:#000;transform:scaleX(1.0153);">empresa</span>
<span class="tx" style="left:323.95px;top:458.35px;font-size:18.4px;color:#000;transform:scaleX(1.0388);">como</span>
<span class="tx" style="left:376.07px;top:458.35px;font-size:18.4px;color:#000;transform:scaleX(0.9567);">Jefe</span>
<span class="tx" style="left:414.73px;top:458.35px;font-size:18.4px;color:#000;transform:scaleX(1.0260);">de</span>
<span class="tx" style="left:441.12px;top:458.35px;font-size:18.4px;color:#000;transform:scaleX(1.0634);">Marketing,</span>
<span class="tx" style="left:537.81px;top:458.35px;font-size:18.4px;color:#000;transform:scaleX(1.0652);">durante</span>
<span class="tx" style="left:609.64px;top:458.35px;font-size:18.4px;color:#000;transform:scaleX(1.0434);">el</span>
<span class="tx" style="left:629.99px;top:458.35px;font-size:18.4px;color:#000;transform:scaleX(1.0644);">periodo</span>
<span class="tx" style="left:700.69px;top:458.35px;font-size:18.4px;color:#000;transform:scaleX(1.0529);">comprendido</span>
<span class="tx" style="left:818.03px;top:458.35px;font-size:18.4px;color:#000;transform:scaleX(1.0799);">entre</span>
<span class="tx" style="left:868.69px;top:458.35px;font-size:18.4px;color:#000;transform:scaleX(1.0768);">10/01/2017</span>
<span class="tx" style="left:973.21px;top:458.35px;font-size:18.4px;color:#000;transform:scaleX(1.0078);">hasta</span>
<span class="tx" style="left:1023.95px;top:458.35px;font-size:18.4px;color:#000;transform:scaleX(1.0434);">el</span>
<span class="tx" style="left:245.90px;top:485.35px;font-size:18.4px;color:#000;transform:scaleX(1.0882);">11/03/2019,</span>
<span class="tx" style="left:356.59px;top:485.35px;font-size:18.4px;color:#000;transform:scaleX(1.0479);">demostrando</span>
<span class="tx" style="left:475.54px;top:485.35px;font-size:18.4px;color:#000;transform:scaleX(1.0652);">durante</span>
<span class="tx" style="left:548.41px;top:485.35px;font-size:18.4px;color:#000;transform:scaleX(0.9677);">su</span>
<span class="tx" style="left:573.66px;top:485.35px;font-size:18.4px;color:#000;transform:scaleX(1.0291);">permanencia</span>
<span class="tx" style="left:689.52px;top:485.35px;font-size:18.4px;color:#000;transform:scaleX(1.0238);">responsabilidad,</span>
<span class="tx" style="left:833.08px;top:485.35px;font-size:18.4px;color:#000;transform:scaleX(1.0402);">honestidad</span>
<span class="tx" style="left:933.14px;top:485.35px;font-size:18.4px;color:#000;transform:scaleX(1.0105);">y</span>
<span class="tx" style="left:948.88px;top:485.35px;font-size:18.4px;color:#000;transform:scaleX(1.0237);">dedicación</span>
<span class="tx" style="left:245.90px;top:512.35px;font-size:18.4px;color:#000;transform:scaleX(1.0260);">en</span>
<span class="tx" style="left:271.54px;top:512.35px;font-size:18.4px;color:#000;transform:scaleX(0.9602);">las</span>
<span class="tx" style="left:298.76px;top:512.35px;font-size:18.4px;color:#000;transform:scaleX(1.0206);">labores</span>
<span class="tx" style="left:364.97px;top:512.35px;font-size:18.4px;color:#000;transform:scaleX(1.0356);">que</span>
<span class="tx" style="left:401.39px;top:512.35px;font-size:18.4px;color:#000;transform:scaleX(1.0434);">le</span>
<span class="tx" style="left:420.98px;top:512.35px;font-size:18.4px;color:#000;transform:scaleX(1.0743);">fueron</span>
<span class="tx" style="left:481.65px;top:512.35px;font-size:18.4px;color:#000;transform:scaleX(1.0112);">encomendadas.</span>
<span class="tx" style="left:245.90px;top:554.35px;font-size:18.4px;color:#000;transform:scaleX(0.8733);">Se</span>
<span class="tx" style="left:270.19px;top:554.35px;font-size:18.4px;color:#000;transform:scaleX(1.0261);">expide</span>
<span class="tx" style="left:330.44px;top:554.35px;font-size:18.4px;color:#000;transform:scaleX(1.0162);">la</span>
<span class="tx" style="left:349.64px;top:554.35px;font-size:18.4px;color:#000;transform:scaleX(1.0380);">presente</span>
<span class="tx" style="left:428.58px;top:554.35px;font-size:18.4px;color:#000;transform:scaleX(0.9605);">a</span>
<span class="tx" style="left:443.05px;top:554.35px;font-size:18.4px;color:#000;transform:scaleX(1.0553);">solicitud</span>
<span class="tx" style="left:517.82px;top:554.35px;font-size:18.4px;color:#000;transform:scaleX(1.0478);">del</span>
<span class="tx" style="left:548.18px;top:554.35px;font-size:18.4px;color:#000;transform:scaleX(1.0393);">interesado,</span>
<span class="tx" style="left:647.41px;top:554.35px;font-size:18.4px;color:#000;transform:scaleX(1.0217);">para</span>
<span class="tx" style="left:689.66px;top:554.35px;font-size:18.4px;color:#000;transform:scaleX(1.0023);">los</span>
<span class="tx" style="left:717.86px;top:554.35px;font-size:18.4px;color:#000;transform:scaleX(1.0296);">fines</span>
<span class="tx" style="left:762.52px;top:554.35px;font-size:18.4px;color:#000;transform:scaleX(1.0356);">que</span>
<span class="tx" style="left:798.94px;top:554.35px;font-size:18.4px;color:#000;transform:scaleX(1.0036);">crea</span>
<span class="tx" style="left:839.48px;top:554.35px;font-size:18.4px;color:#000;transform:scaleX(1.0409);">conveniente.</span>
<span class="tx" style="left:245.90px;top:596.35px;font-size:18.4px;color:#000;transform:scaleX(0.9939);">Cochabamba,</span>
<span class="tx" style="left:364.36px;top:596.35px;font-size:18.4px;color:#000;transform:scaleX(1.0768);">10/10/2019</span>
<svg class="a" style="left:750px;top:508px" width="22" height="36" viewBox="0 0 22 36"><path d="M1 1H21V4.6H13V31.4H21V35H1V31.4H9V4.6H1Z" fill="#fff" stroke="#000" stroke-width="2"/></svg>
<span class="tx" style="left:2px;top:664.00px;font-size:10.5px;color:#444;transform:scaleX(0.9720);">Página 1 de 1</span>
<span class="tx" style="left:74px;top:664.00px;font-size:10.5px;color:#444;transform:scaleX(0.9841);">86 palabras</span>
<svg class="a" style="left:139px;top:663px" width="12" height="11" viewBox="0 0 12 11"><path d="M0.5 0.5H5.5V10.5H0.5ZM5.5 0.5H10.5V10.5" fill="none" stroke="#999" stroke-width="0.8"/><path d="M6 5L8 7.5L11.5 2" fill="none" stroke="#666" stroke-width="1"/></svg>
<span class="tx" style="left:158px;top:664.00px;font-size:10.5px;color:#444;transform:scaleX(0.9966);">Español (América latina)</span>
<svg class="a" style="left:891px;top:662px" width="16" height="14" viewBox="0 0 16 14"><rect x="0" y="0" width="14" height="9" fill="#555"/><rect x="5" y="9" width="4" height="2" fill="#555"/><circle cx="12" cy="10.5" r="3.2" fill="#555" stroke="#f3f3f3" stroke-width="1"/><circle cx="12" cy="10.5" r="1" fill="#f3f3f3"/></svg>
<span class="tx" style="left:907.5px;top:664.00px;font-size:10.5px;color:#444;transform:scaleX(1.0046);">Configuración de visualización</span>
<svg class="a" style="left:1060px;top:663px" width="12" height="11" viewBox="0 0 12 11"><path d="M0.5 0.5H5.5V10.5H0.5ZM5.5 0.5H10.5V10.5H5.5" fill="none" stroke="#aaa" stroke-width="0.8"/><path d="M1.5 3H4.5M1.5 5H4.5M1.5 7H4.5M6.5 3H9.5M6.5 5H9.5M6.5 7H9.5" stroke="#bbb" stroke-width="0.8"/></svg>
<div class="a" style="left:1077.5px;top:658.5px;width:20px;height:21.5px;background:#c8c8c8;"></div>
<svg class="a" style="left:1081px;top:663px" width="13" height="12" viewBox="0 0 13 12"><rect x="0.5" y="0.5" width="12" height="11" fill="#e6e6e6" stroke="#777" stroke-width="0.9"/><path d="M2.5 3H10.5M2.5 5H10.5M2.5 7H10.5M2.5 9H10.5" stroke="#888" stroke-width="0.8"/></svg>
<svg class="a" style="left:1103px;top:663px" width="14" height="12" viewBox="0 0 14 12"><rect x="0.5" y="0.5" width="11" height="10" fill="none" stroke="#999" stroke-width="0.8"/><path d="M2 3H10M2 5H7M2 7H6" stroke="#aaa" stroke-width="0.8"/><circle cx="10.5" cy="9" r="2.8" fill="#777"/></svg>
<div class="a" style="left:1125px;top:668.5px;width:6px;height:1.2px;background:#555;"></div>
<div class="a" style="left:1133px;top:668.5px;width:103px;height:1px;background:#b0b0b0;"></div>
<div class="a" style="left:1180px;top:666px;width:1px;height:6px;background:#999;"></div>
<div class="a" style="left:1187px;top:663px;width:5px;height:11px;background:#6f6f6f;"></div>
<svg class="a" style="left:1238px;top:664px" width="8" height="8" viewBox="0 0 8 8"><path d="M4 0V8M0 4H8" stroke="#555" stroke-width="1.5"/></svg>
<span class="tx" style="left:1251px;top:664.00px;font-size:10.5px;color:#444;transform:scaleX(0.9680);">140%</span>
<svg class="a" style="left:16px;top:692px" width="16" height="16" viewBox="0 0 16 16"><path d="M0 2L7 1V7H0ZM8 0.9L16 0V7H8ZM0 8H7V15L0 14ZM8 8H16V16L8 15.1Z" fill="#000"/></svg>
<div class="a" style="left:51px;top:680px;width:160px;height:40px;background:#eef3f9;"></div>
<div class="a" style="left:51px;top:718px;width:160px;height:2px;background:#1a86c8;"></div>
<svg class="a" style="left:61px;top:689.5px" width="24" height="21" viewBox="0 0 24 21"><rect x="5.7" y="0" width="17.6" height="20.8" rx="1" fill="#185abd"/><rect x="5.7" y="0" width="17.6" height="5.4" rx="1" fill="#41a5ee"/><rect x="5.7" y="5.2" width="17.6" height="5.2" fill="#2b7cd3"/><rect x="5.7" y="10.4" width="17.6" height="5.2" fill="#185abd"/><rect x="5.7" y="15.6" width="17.6" height="5.2" rx="1" fill="#103f91"/><rect x="0" y="4.7" width="11.7" height="11.3" rx="1" fill="#185abd"/><path d="M1.8 7.2H3.2L4.3 12.2L5.3 7.2H6.5L7.5 12.2L8.6 7.2H10L8.2 14H6.9L5.9 9.6L4.9 14H3.6Z" fill="#fff"/></svg>
<span class="tx" style="left:86.7px;top:694.60px;font-size:12.6px;color:#111;transform:scaleX(0.9603);">Documento1 - Word</span>
<svg class="a" style="left:1058px;top:695px" width="14" height="8" viewBox="0 0 14 8"><path d="M0.8 7.5L7 1L13.2 7.5" fill="none" stroke="#111" stroke-width="1.4"/></svg>
<svg class="a" style="left:1083px;top:690px" width="11" height="20" viewBox="0 0 11 20"><rect x="2.5" y="0" width="6" height="11.5" rx="3" fill="#111"/><path d="M0.7 8A4.8 4.8 0 0 0 10.3 8" fill="none" stroke="#111" stroke-width="1.3"/><path d="M5.5 13V17M2 17.5H9" stroke="#111" stroke-width="1.3"/></svg>
<svg class="a" style="left:1104px;top:692px" width="16" height="16" viewBox="0 0 16 16"><circle cx="8" cy="8" r="8" fill="#1db954"/><path d="M3.5 5.6Q8.5 4 12.8 6.3M4 8.3Q8.2 7 11.8 8.9M4.5 10.8Q8 9.8 11 11.4" fill="none" stroke="#111" stroke-width="1.3" stroke-linecap="round"/></svg>
<span class="tx" style="left:1133.5px;top:694.60px;font-size:12.6px;color:#111;transform:scaleX(0.7737);">ESP</span>
<span class="tx" style="left:1180.5px;top:685.64px;font-size:12px;color:#111;transform:scaleX(0.8991);">16:49</span>
<span class="tx" style="left:1167.5px;top:704.64px;font-size:12px;color:#111;transform:scaleX(1.0114);">10/7/2019</span>
<svg class="a" style="left:1239px;top:692px" width="17" height="16" viewBox="0 0 17 16"><path d="M0.7 0.7H16.3V11.3H11.5L8.5 14.8L5.5 11.3H0.7Z" fill="none" stroke="#111" stroke-width="1.2"/></svg>
<div class="a" style="left:1275px;top:680px;width:1px;height:40px;background:#c5ccd6;"></div></body></html>
